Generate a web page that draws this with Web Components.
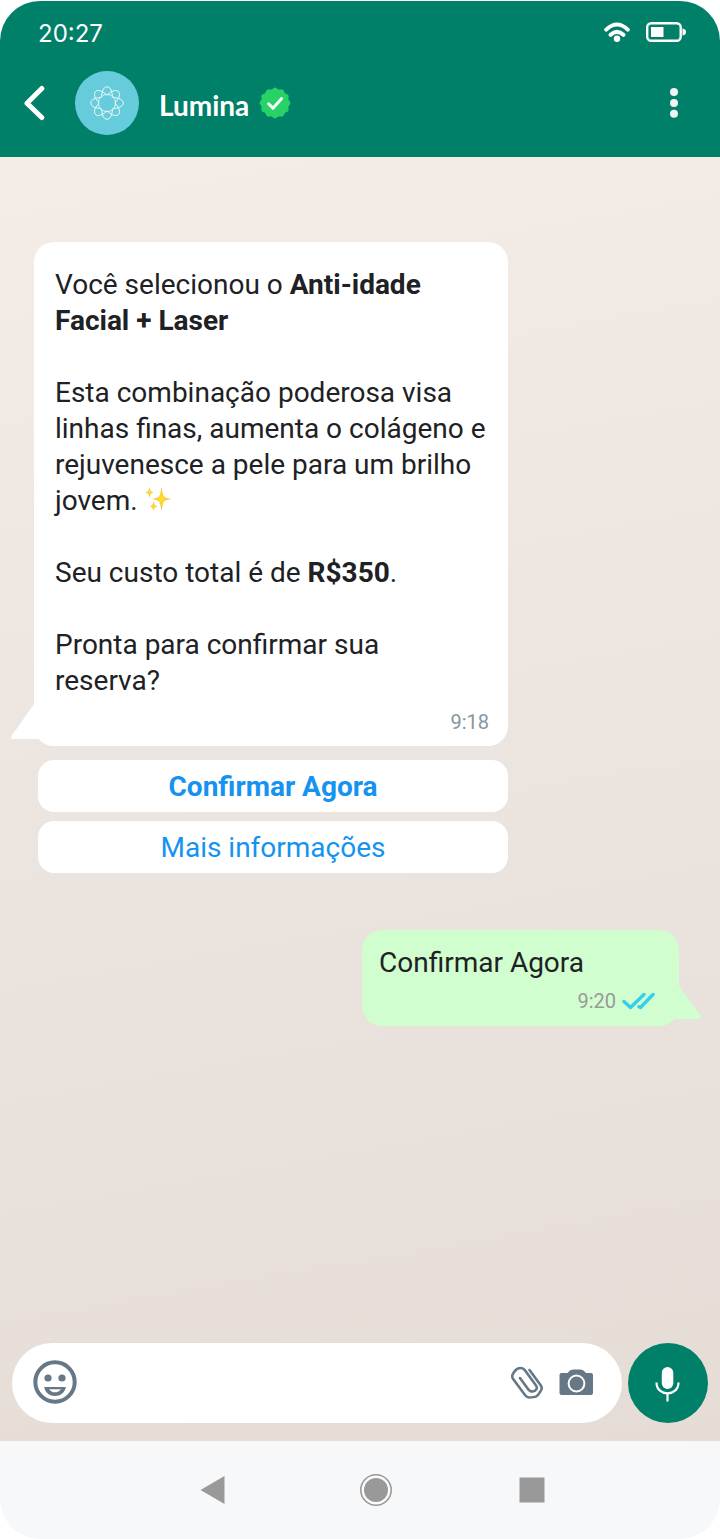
<!DOCTYPE html>
<html lang="pt-BR">
<head>
<meta charset="utf-8">
<meta name="viewport" content="width=device-width, initial-scale=1">
<title>Lumina</title>
<style>
  body { margin: 0; background: #fff; font-family: Roboto, "Liberation Sans", sans-serif; }
</style>
</head>
<body>
<phone-screen>
  <status-bar slot="top" time="20:27"></status-bar>
  <chat-header slot="top" name="Lumina"></chat-header>
  <chat-bubble time="9:18">
    <p>Você selecionou o <b>Anti-idade</b><br><b>Facial + Laser</b></p>
    <p>Esta combinação poderosa visa linhas finas, aumenta o colágeno e rejuvenesce a pele para um brilho jovem. <sparkle-icon></sparkle-icon></p>
    <p>Seu custo total é de <b>R$350</b>.</p>
    <p>Pronta para confirmar sua<br>reserva?</p>
  </chat-bubble>
  <reply-options>
    <reply-option strong>Confirmar Agora</reply-option>
    <reply-option>Mais informações</reply-option>
  </reply-options>
  <chat-bubble outgoing time="9:20"><p>Confirmar Agora</p></chat-bubble>
  <message-composer slot="composer"></message-composer>
  <system-nav slot="bottom"></system-nav>
</phone-screen>

<script>
const define = (name, html, setup) => customElements.define(name, class extends HTMLElement {
  constructor() {
    super();
    const root = this.attachShadow({ mode: "open" });
    root.innerHTML = `<style>
      *, :host { box-sizing: border-box; }
      :host { display: block; }
      svg { display: block; }
      button { font: inherit; color: inherit; background: none; border: 0; padding: 0; margin: 0; cursor: pointer; }
    </style>` + html;
  }
  connectedCallback() { if (setup) setup(this, this.shadowRoot); }
});

define("phone-screen", `
  <style>
    :host { display: flex; flex-direction: column; min-height: 100vh; padding-top: 1px; }
    header { background: #008069; border-radius: 40px 40px 0 0; }
    main { flex: 1; display: flex; flex-direction: column; background: linear-gradient(170deg, #f3ece7, #e5dcd6); }
    .messages { flex: 1; display: flex; flex-direction: column; padding: 85px 40px 40px 34px; }
    .composer { padding: 0 12px 18px; }
  </style>
  <header><slot name="top"></slot></header>
  <main>
    <div class="messages"><slot></slot></div>
    <div class="composer"><slot name="composer"></slot></div>
  </main>
  <footer><slot name="bottom"></slot></footer>`);

define("status-bar", `
  <style>
    :host { display: flex; align-items: center; gap: 16px; height: 62px; padding: 0 34px 0 38px; color: #fff;
      font: 24px/28px Inter, sans-serif; }
    time { flex: 1; padding-top: 3px; }
  </style>
  <time></time>
  <svg width="26" height="20" viewBox="0 0 26 20" fill="none" stroke="#fff" stroke-width="4" stroke-linecap="round" role="img" aria-label="Wi-Fi">
    <path d="M2.200 7.6Q13-2.600 23.800 7.600M6.600 12.800Q13 6.800 19.400 12.800"/><circle cx="13" cy="16.800" r="3.200" fill="#fff" stroke="none"/>
  </svg>
  <svg width="40" height="20" viewBox="0 0 40 20" role="img" aria-label="Bateria">
    <rect x="1.200" y="1.200" width="33.500" height="17.600" rx="4" fill="none" stroke="#fff" stroke-width="2.400"/>
    <rect x="5" y="5" width="12.5" height="10" fill="#fff"/><path d="M36.5 6.5Q40 7 40 10T36.5 13.5Z" fill="#fff"/>
  </svg>`, (el, root) => { root.querySelector("time").textContent = el.getAttribute("time"); });

define("chat-header", `
  <style>
    :host { display: flex; align-items: center; height: 94px; padding: 0 36px 14px 24px; color: #fff; }
    .avatar { margin: 0 20px 0 30px; }
    h1 { margin: 0; padding-top: 3px; font: 700 28px/32px Lato, sans-serif; }
    .badge { margin-left: 10px; }
    .menu { margin-left: auto; width: 20px; display: grid; justify-content: center; }
  </style>
  <button aria-label="Voltar"><svg width="21" height="36" viewBox="0 0 21 36" fill="none" stroke="#fff" stroke-width="5" stroke-linecap="round" stroke-linejoin="round"><path d="M17.800 3.500 3 18.200 17.800 32.500"/></svg></button>
  <svg class="avatar" width="64" height="64" viewBox="-32 -32 64 64" fill="none" stroke="#fff" stroke-width="1">
    <circle r="32" fill="#66ccdb" stroke="none"/>
    <path id="flower"/>
  </svg>
  <h1></h1>
  <svg class="badge" width="32" height="32" viewBox="-16 -16 32 32" role="img" aria-label="Verificado">
    <path id="seal" fill="#27d366"/><path d="M-6.4.8-2 5.2 6.6-4.4" fill="none" stroke="#fff" stroke-width="3" stroke-linecap="round" stroke-linejoin="round"/>
  </svg>
  <button class="menu" aria-label="Menu"><svg width="8" height="30" viewBox="0 0 8 30" fill="#f2f2f2"><circle cx="4" cy="4" r="4"/><circle cx="4" cy="15" r="4"/><circle cx="4" cy="25.700" r="4"/></svg></button>`,
  (el, root) => {
    root.querySelector("h1").textContent = el.getAttribute("name");
    const polar = (steps, turns, radius) => {
      let d = "";
      for (let i = 0; i <= steps; i++) {
        const a = i * turns * 2 * Math.PI / steps, r = radius(a);
        d += (i ? "L" : "M") + (r * Math.sin(a)).toFixed(2) + " " + (-r * Math.cos(a)).toFixed(2);
      }
      return d + "Z";
    };
    // One line that winds three times round the centre makes the eight petals.
    root.getElementById("flower").setAttribute("d", polar(480, 3, a => 11 + 3.8 * Math.cos(8 * a / 3) + 1.4 * Math.cos(16 * a / 3)));
    root.getElementById("seal").setAttribute("d", polar(144, 1, a => 14.7 + 0.7 * Math.cos(12 * a)));
  });

define("sparkle-icon", `
  <style>:host { display: inline-block; vertical-align: -3px; }</style>
  <svg width="27" height="26" viewBox="0 0 27 26" role="img" aria-label="Brilhos">
    <defs><radialGradient id="g"><stop stop-color="#fde030"/><stop offset=".5" stop-color="#fbcf35"/><stop offset="1" stop-color="#f7a24b"/></radialGradient></defs>
    <g fill="url(#g)"><path d="M16.500 0Q17.300 6.500 19 9.500 21 11.300 26 12 21 12.700 19 14.500 17.300 17.500 16.500 24 15.700 17.500 14 14.500 12 12.700 7 12 12 11.300 14 9.500 15.700 6.500 16.500 0Z"/>
    <path d="M4.500 0Q5 4.500 8.500 5.500 5 6.200 4.500 11 4 6.200 .5 5.500 4 4.500 4.500 0Z"/><path d="M8.500 14Q9 18.500 12 19.200 9 19.900 8.500 24.500 8 19.900 5 19.200 8 18.500 8.500 14Z"/></g>
  </svg>`);

define("chat-bubble", `
  <style>
    :host { position: relative; width: 100%; max-width: 474px; padding: 25px 19px 10px 21px; border-radius: 20px; background: #fff;
      color: #202124; font-size: 28px; line-height: 36px; }
    ::slotted(p) { margin: 0 0 36px; }
    ::slotted(p:last-of-type) { margin: 0; }
    footer { display: flex; justify-content: flex-end; align-items: center; gap: 6px; margin-top: 9px; color: #8696a0; font-size: 20px; line-height: 28px; }
    .tail { position: absolute; left: -23px; bottom: 7px; }
    .ticks { display: none; }
    :host([outgoing]) { align-self: flex-end; max-width: 317px; margin-top: 57px; padding: 15px 24px 10px 17px; background: #d0fecf; margin-right: 1px; }
    :host([outgoing]) footer { margin-top: 5px; line-height: 30px; color: #999; }
    :host([outgoing]) .ticks { display: block; }
    :host([outgoing]) .tail { left: auto; right: -22px; transform: scaleX(-1); }
  </style>
  <svg class="tail" width="32" height="40" viewBox="0 0 32 40"><path id="tail" d="M23 5 .8 36.500Q-1 40 2 40H31V20H23Z"/></svg>
  <slot></slot>
  <footer><time></time><svg class="ticks" width="33" height="18" viewBox="0 0 33 18" fill="none" stroke="#34cfee" stroke-width="3.400" stroke-linecap="round" stroke-linejoin="round"><path d="M2 9.500 8.500 15.500 22 2.500M17 14.800 18.500 15.500 31 2.500"/></svg></footer>`,
  (el, root) => {
    root.querySelector("time").textContent = el.getAttribute("time");
    root.getElementById("tail").setAttribute("fill", el.hasAttribute("outgoing") ? "#d0fecf" : "#fff");
  });

define("reply-options", `
  <style>:host { display: grid; gap: 9px; width: 100%; max-width: 474px; padding-left: 4px; margin-top: 14px; }</style>
  <slot></slot>`);

define("reply-option", `
  <style>
    button { display: block; width: 100%; height: 52px; padding-top: 2px; border-radius: 16px; background: #fff; color: #1593f0; font-size: 28px; line-height: 36px; }
    :host([strong]) button { font-weight: 700; }
  </style>
  <button><slot></slot></button>`);

define("message-composer", `
  <style>
    :host { display: flex; gap: 6px; }
    .field { flex: 1; min-width: 0; display: flex; align-items: center; height: 80px; padding: 0 28px 2px 21px; border-radius: 40px; background: #fff; }
    input { flex: 1; min-width: 0; border: 0; outline: 0; background: none; margin: 0 16px; font: 28px/36px Roboto, sans-serif; }
    .camera { margin-left: 16px; }
    .mic { width: 80px; height: 80px; border-radius: 50%; background: #008069; display: grid; place-content: center; }
  </style>
  <div class="field">
    <button aria-label="Emoji"><svg width="44" height="44" viewBox="0 0 44 44" fill="#667885"><circle cx="22" cy="22" r="19.700" fill="none" stroke="#667885" stroke-width="4"/><circle cx="15" cy="18" r="3.600"/><circle cx="29" cy="18" r="3.600"/><path fill-rule="evenodd" d="M11.300 27H32.700C32.700 31 28.500 36 22 36S11.300 31 11.300 27ZM16 29.200C17.500 31.300 19.500 32.300 22 32.300S26.500 31.300 28 29.200Z"/></svg></button>
    <input type="text" aria-label="Mensagem">
    <button aria-label="Anexar"><svg width="32" height="33" viewBox="0 0 32 33" fill="none" stroke="#667885" stroke-width="2.600" stroke-linecap="round" stroke-linejoin="round"><path d="M18.500 4 29.500 19C31.500 22 31 23 28.500 26.800 26 31 25 31.200 18 31.500 16 31.500 15.500 31 14 29L2.500 13.500C0 10 1.500 8.500 3.500 5.500 5.500 2.500 7 2 9.500 2 12 2 13.500 3.500 14.500 5L25 19.500C27 22 25 25.500 21.500 25.500 19 25.500 18 24.500 17 23L9 12"/></svg></button>
    <button class="camera" aria-label="Câmera"><svg width="35" height="28" viewBox="0 0 35 28"><path fill="#667885" d="M2.500 5H8.500L11 2.500Q12.500 1.500 15 1.500H20.500Q23 1.500 24.500 2.500L27 5H32Q34 5 34 7V25Q34 27 32 27H2.500Q.5 27 .5 25V7Q.5 5 2.500 5Z"/><circle cx="17.500" cy="15.500" r="7.900" fill="none" stroke="#fff" stroke-width="2"/></svg></button>
  </div>
  <button class="mic" aria-label="Gravar áudio"><svg width="26" height="38" viewBox="0 0 26 38"><rect x="6.800" y="3" width="11.500" height="22" rx="5.750" fill="#fff"/><path d="M1.500 18.500C1.500 33 23.500 33 23.500 18.500M12.500 29.500V37.500" fill="none" stroke="#fff" stroke-width="2.200"/></svg></button>`);

define("system-nav", `
  <style>
    :host { display: grid; grid-template-columns: 1fr 32px 1fr; align-items: center; height: 98px; padding: 0 8px 0 40px; background: #f7f8fa; border-radius: 0 0 40px 40px; }
    button:first-of-type { justify-self: end; margin-right: 135px; }
    button:last-of-type { justify-self: start; margin-left: 127px; }
  </style>
  <button aria-label="Voltar"><svg width="25" height="28" viewBox="0 0 25 28"><path d="M24.500 0V28L0.500 14Z" fill="#999"/></svg></button>
  <button aria-label="Início"><svg width="32" height="32" viewBox="0 0 32 32"><circle cx="16" cy="16" r="15.200" fill="#fcfcfd" stroke="#999" stroke-width="1.600"/><circle cx="16" cy="16" r="12" fill="#999"/></svg></button>
  <button aria-label="Recentes"><svg width="26" height="26" viewBox="0 0 26 26"><rect x=".5" y=".5" width="25" height="25" fill="#999"/></svg></button>`);
</script>
</body>
</html>
